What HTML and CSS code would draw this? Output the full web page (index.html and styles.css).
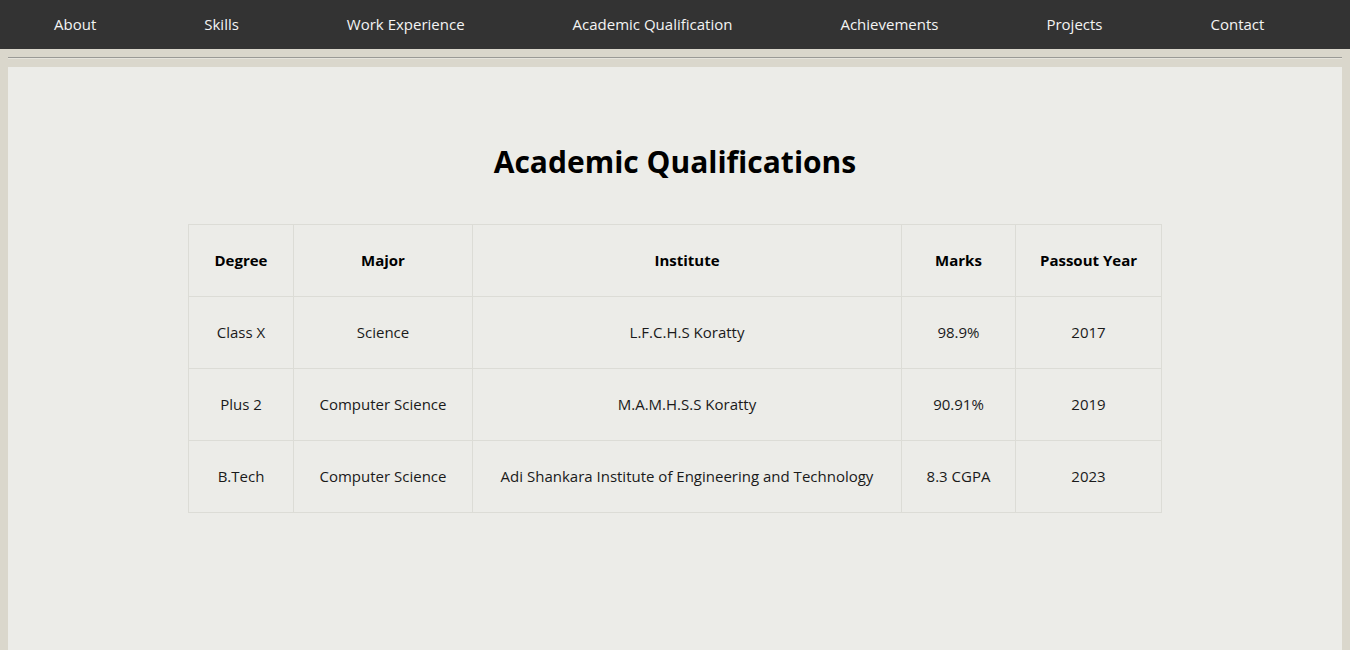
FILE: index.html
```html
<!DOCTYPE html>
<html lang="en">
<head>
<meta charset="utf-8">
<title>Academic Qualifications</title>
<link rel="stylesheet" href="styles.css">
</head>
<body>
<nav class="topnav">
  <a href="#about">About</a>
  <a href="#skills">Skills</a>
  <a href="#work">Work Experience</a>
  <a href="#academic">Academic Qualification</a>
  <a href="#achievements">Achievements</a>
  <a href="#projects">Projects</a>
  <a href="#contact">Contact</a>
</nav>
<div class="page">
  <hr class="rule">
  <section class="panel" id="academic">
    <h2 class="title">Academic Qualifications</h2>
    <table class="quals">
      <colgroup>
        <col class="c1"><col class="c2"><col class="c3"><col class="c4"><col class="c5">
      </colgroup>
      <thead>
        <tr><th>Degree</th><th>Major</th><th>Institute</th><th>Marks</th><th>Passout Year</th></tr>
      </thead>
      <tbody>
        <tr><td>Class X</td><td>Science</td><td>L.F.C.H.S Koratty</td><td>98.9%</td><td>2017</td></tr>
        <tr><td>Plus 2</td><td>Computer Science</td><td>M.A.M.H.S.S Koratty</td><td>90.91%</td><td>2019</td></tr>
        <tr><td>B.Tech</td><td>Computer Science</td><td>Adi Shankara Institute of Engineering and Technology</td><td>8.3 CGPA</td><td>2023</td></tr>
      </tbody>
    </table>
  </section>
</div>
</body>
</html>
```

FILE: styles.css
```css
html, body {
  margin: 0;
  padding: 0;
}
body {
  background: #dad7cc;
  font-family: "Open Sans", "Noto Sans", sans-serif;
  font-size: 15px;
  color: #1a1a1a;
}
.topnav {
  display: flex;
  height: 49px;
  align-items: center;
  background: #333333;
}
.topnav a {
  color: #f4f4f4;
  text-decoration: none;
  padding: 0 54px;
  line-height: 49px;
}
.page {
  padding: 0 8px;
}
.rule {
  margin: 8px 0;
  border: 0;
  border-top: 1px solid #9a9a96;
  border-bottom: 1px solid #e6e4dc;
  height: 0;
}
.panel {
  box-sizing: border-box;
  background: #ecece8;
  min-height: 583px;
  padding-top: 73px;
}
.title {
  margin: 0 0 40px;
  text-align: center;
  font-size: 30px;
  line-height: 44px;
  font-weight: 700;
  color: #000;
}
.quals {
  margin: 0 auto;
  width: 973px;
  table-layout: fixed;
  border-collapse: collapse;
}
.c1 { width: 105px; }
.c2 { width: 179px; }
.c3 { width: 429px; }
.c4 { width: 114px; }
.c5 { width: 146px; }
.quals th,
.quals td {
  border: 1px solid #dcdcd6;
  padding: 25px 0;
  line-height: 21px;
  text-align: center;
  white-space: nowrap;
}
.quals th {
  font-weight: 700;
  color: #000;
}
```
